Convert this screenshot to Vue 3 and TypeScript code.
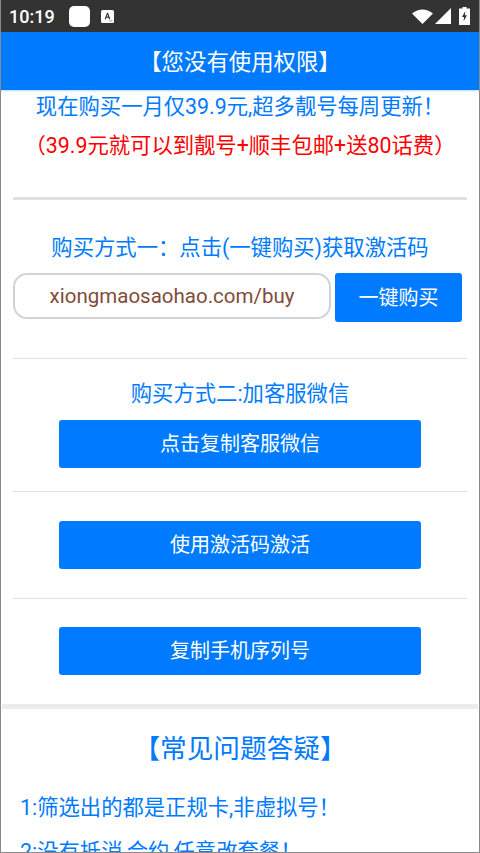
<script setup lang="ts">
const faqs: string[] = ['1:筛选出的都是正规卡,非虚拟号！', '2:没有抵消,合约,任意改套餐！']
</script>

<template>
  <div class="phone">
    <div class="status">
      <span class="time">10:19</span>
      <span class="square"></span>
      <svg class="a-icon" width="13" height="13" viewBox="0 0 13 13">
        <rect x="0" y="0" width="13" height="13" rx="1.5" fill="#fff" />
        <path d="M3.6 9.2 L6 2.8 H7 L9.4 9.2 H8 L7.5 7.7 H5.4 L4.9 9.2 Z M5.8 6.5 H7.1 L6.5 4.6 Z" fill="#333" />
        <rect x="8" y="10.4" width="3.5" height="1" fill="#999" />
      </svg>
      <span class="spacer"></span>
      <svg class="wifi" width="21" height="15" viewBox="0 0 21 15">
        <path d="M0 4.5 Q10.5 -3.5 21 4.5 L10.5 15 Z" fill="#fff" />
      </svg>
      <svg class="signal" width="16" height="16" viewBox="0 0 16 16">
        <path d="M16 0 V16 H0 Z" fill="#fff" />
      </svg>
      <svg class="battery" width="11" height="18" viewBox="0 0 11 18">
        <path d="M3.5 0 H7.5 V1.5 H11 V18 H0 V1.5 H3.5 Z" fill="#fff" />
        <path d="M6.3 4 L3 10 H5.1 L4.5 14.5 L8 8.3 H5.9 Z" fill="#333" />
      </svg>
    </div>
    <header class="head">【您没有使用权限】</header>
    <main class="body">
      <p class="promo">现在购买一月仅39.9元,超多靓号每周更新！</p>
      <p class="promo red">（39.9元就可以到靓号+顺丰包邮+送80话费）</p>
      <hr class="rule thick" />
      <p class="way one">购买方式一：点击(一键购买)获取激活码</p>
      <div class="buy-row">
        <div class="url">xiongmaosaohao.com/buy</div>
        <button class="btn small">一键购买</button>
      </div>
      <hr class="rule r1" />
      <p class="way two">购买方式二:加客服微信</p>
      <button class="btn wide">点击复制客服微信</button>
      <hr class="rule r2" />
      <button class="btn wide">使用激活码激活</button>
      <hr class="rule r3" />
      <button class="btn wide">复制手机序列号</button>
      <div class="band"></div>
      <h2 class="faq-title">【常见问题答疑】</h2>
      <p v-for="f in faqs" :key="f" class="faq">{{ f }}</p>
    </main>
  </div>
</template>

<style scoped>
.phone {
  width: 480px;
  height: 853px;
  overflow: hidden;
  box-sizing: border-box;
  position: relative;
  background: #fff;
  font-family: Roboto, "Noto Sans CJK SC", sans-serif;
  display: flex;
  flex-direction: column;
  border-left: 1px solid #8a8a8a;
  border-right: 1px solid #8a8a8a;
  border-bottom: 1px solid #8a8a8a;
}
.status {
  height: 32px;
  margin: 0 -1px;
  flex: none;
  background: #333;
  color: #fff;
  display: flex;
  align-items: center;
  padding: 0 9px 0 9px;
  box-sizing: border-box;
}
.time { font-size: 18px; font-weight: 500; letter-spacing: 0; width: 60px; }
.square { width: 21px; height: 21px; border-radius: 5px; background: #fff; }
.a-icon { margin-left: 11px; }
.spacer { flex: 1; }
.signal { margin-left: 2px; }
.battery { margin-left: 8px; margin-right: 1px; }
.head {
  height: 58px;
  flex: none;
  margin: 0 -1px;
  padding-bottom: 3px;
  box-sizing: border-box;
  background: #007bff;
  color: #fff;
  font-size: 22.4px;
  display: flex;
  align-items: center;
  justify-content: center;
  box-shadow: 0 1px 2px rgba(0, 123, 255, 0.3);
}
.body { flex: 1; min-height: 0; display: flex; flex-direction: column; align-items: center; }
p { margin: 0; }
.promo { font-size: 21.33px; line-height: 32px; color: #007bff; white-space: nowrap; margin-top: 1px; }
.promo.red { color: #f00; margin-top: 7px; }
.rule { border: 0; width: 454px; margin: 0; background: #dfe1e4; height: 1px; flex: none; }
.rule.thick { height: 3px; margin-top: 35px; }
.way { font-size: 21.33px; line-height: 30px; color: #007bff; white-space: nowrap; }
.way.one { margin-top: 33px; }
.buy-row { width: 449px; display: flex; justify-content: space-between; margin: 10px 5px 0 0; align-items: flex-start; }
.url {
  width: 318px;
  height: 46px;
  box-sizing: border-box;
  border: 2px solid #d0d4d8;
  border-radius: 14px;
  color: #7f4c39;
  font-size: 20.5px;
  display: flex;
  align-items: center;
  justify-content: center;
}
.btn {
  border: 0;
  padding: 0 0 3px;
  box-sizing: border-box;
  background: #007bff;
  color: #fff;
  font-family: inherit;
  border-radius: 3px;
  display: block;
  flex: none;
}
.btn.small { width: 127px; height: 49px; font-size: 20px; }
.btn.wide { width: 362px; height: 48px; font-size: 20px; }
.r1 { margin-top: 36px; }
.way.two { margin-top: 20px; }
.way.two + .btn { margin-top: 11px; }
.r2 { margin-top: 23px; }
.r2 + .btn { margin-top: 29px; }
.r3 { margin-top: 29px; }
.r3 + .btn { margin-top: 28px; }
.band { width: 476px; height: 5px; background: #ececec; flex: none; margin-top: 29px; }
.faq-title { margin: 22px 0 0; font-size: 26.67px; font-weight: 400; line-height: 36px; color: #007bff; }
.faq { align-self: flex-start; margin-left: 19px; font-size: 21.33px; line-height: 30px; color: #007bff; white-space: nowrap; margin-top: 14px; }
.faq-title + .faq { margin-top: 26px; }
</style>

<style>
html, body { margin: 0; padding: 0; background: #fff; }
</style>
